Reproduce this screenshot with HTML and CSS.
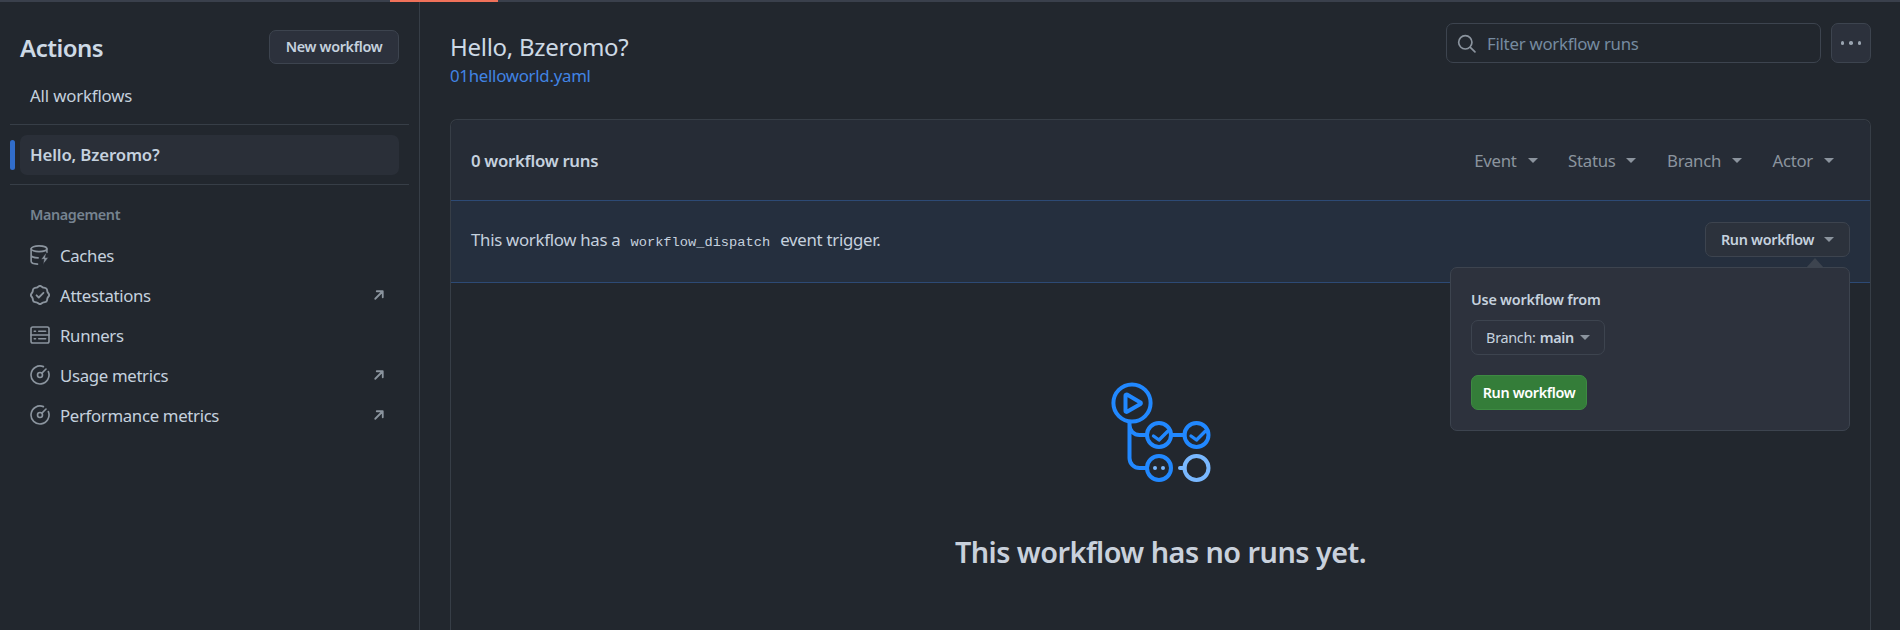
FILE: index.html
```html
<!DOCTYPE html>
<html lang="en">
<head>
<meta charset="utf-8">
<title>Actions</title>
<link rel="stylesheet" href="styles.css">
</head>
<body>
<div class="topbar"><span class="progress"></span></div>
<div class="layout">
  <aside class="sidebar">
    <div class="side-head">
      <h2 class="side-title">Actions</h2>
      <button class="btn btn-new">New workflow</button>
    </div>
    <a class="side-all">All workflows</a>
    <hr class="side-rule">
    <div class="side-current"><span class="side-marker"></span><a class="side-selected">Hello, Bzeromo?</a></div>
    <hr class="side-rule">
    <div class="side-label">Management</div>
    <ul class="side-list">
      <li class="side-item">
        <svg class="ico" viewBox="0 0 16 16"><ellipse cx="7.2" cy="3" rx="6.3" ry="2.3"/><path d="M.9 3v10c0 1.3 2.4 2.2 5.1 2.3M.9 8c0 1.3 2.6 2.3 5.6 2.3M13.5 3v3"/><path class="fill" d="M12.6 6.6 8.8 11.4h2.4l-.8 4.2 4.4-5.5h-2.6l.9-3.5z"/></svg>
        <span class="side-text">Caches</span>
      </li>
      <li class="side-item">
        <svg class="ico ico-solid" viewBox="0 0 16 16"><path d="m9.585.52.929.68c.153.112.331.186.518.215l1.138.175a2.678 2.678 0 0 1 2.24 2.24l.174 1.139c.029.187.103.365.215.518l.68.928a2.677 2.677 0 0 1 0 3.17l-.68.928a1.174 1.174 0 0 0-.215.518l-.175 1.138a2.678 2.678 0 0 1-2.241 2.241l-1.138.175a1.17 1.17 0 0 0-.518.215l-.928.68a2.677 2.677 0 0 1-3.17 0l-.928-.68a1.174 1.174 0 0 0-.518-.215L3.83 14.41a2.678 2.678 0 0 1-2.24-2.24l-.175-1.138a1.17 1.17 0 0 0-.215-.518l-.68-.928a2.677 2.677 0 0 1 0-3.17l.68-.928c.112-.153.186-.331.215-.518l.175-1.14a2.678 2.678 0 0 1 2.24-2.24l1.139-.175c.187-.029.365-.103.518-.215l.928-.68a2.677 2.677 0 0 1 3.17 0ZM7.303 1.728l-.927.68a2.67 2.67 0 0 1-1.18.489l-1.137.174a1.179 1.179 0 0 0-.987.987l-.174 1.136a2.677 2.677 0 0 1-.489 1.18l-.68.928a1.18 1.18 0 0 0 0 1.394l.68.927c.256.348.424.753.489 1.18l.174 1.137c.078.509.478.909.987.987l1.136.174a2.67 2.67 0 0 1 1.18.489l.928.68c.414.305.979.305 1.394 0l.927-.68a2.67 2.67 0 0 1 1.18-.489l1.137-.174a1.18 1.18 0 0 0 .987-.987l.174-1.136a2.67 2.67 0 0 1 .489-1.18l.68-.928a1.176 1.176 0 0 0 0-1.394l-.68-.927a2.686 2.686 0 0 1-.489-1.18l-.174-1.137a1.179 1.179 0 0 0-.987-.987l-1.136-.174a2.677 2.677 0 0 1-1.18-.489l-.928-.68a1.176 1.176 0 0 0-1.394 0ZM11.28 6.78l-3.75 3.75a.75.75 0 0 1-1.06 0L4.72 8.78a.751.751 0 0 1 .018-1.042.751.751 0 0 1 1.042-.018L7 8.94l3.22-3.22a.751.751 0 0 1 1.042.018.751.751 0 0 1 .018 1.042Z"/></svg>
        <span class="side-text">Attestations</span>
        <svg class="ext" viewBox="0 0 16 16"><path d="M3 13 13 3M5 3h8v8"/></svg>
      </li>
      <li class="side-item">
        <svg class="ico" viewBox="0 0 16 16"><rect x=".8" y="1.6" width="14.4" height="12.8" rx="1.4"/><path d="M.8 8h14.4M7 5h5.5M7 11h5.5M3.4 5h1M3.4 11h1"/></svg>
        <span class="side-text">Runners</span>
      </li>
      <li class="side-item">
        <svg class="ico" viewBox="0 0 16 16"><path d="M10.7 1.3A7.2 7.2 0 1 0 14.7 5.3"/><circle cx="8" cy="8" r="2"/><path d="M9.5 6.5 12.8 3.2"/></svg>
        <span class="side-text">Usage metrics</span>
        <svg class="ext" viewBox="0 0 16 16"><path d="M3 13 13 3M5 3h8v8"/></svg>
      </li>
      <li class="side-item">
        <svg class="ico" viewBox="0 0 16 16"><path d="M10.7 1.3A7.2 7.2 0 1 0 14.7 5.3"/><circle cx="8" cy="8" r="2"/><path d="M9.5 6.5 12.8 3.2"/></svg>
        <span class="side-text">Performance metrics</span>
        <svg class="ext" viewBox="0 0 16 16"><path d="M3 13 13 3M5 3h8v8"/></svg>
      </li>
    </ul>
  </aside>
  <main class="main">
    <header class="main-head">
      <div class="main-titles">
        <h1 class="main-title">Hello, Bzeromo?</h1>
        <a class="main-link">01helloworld.yaml</a>
      </div>
      <div class="main-tools">
        <div class="search">
          <svg class="search-ico" viewBox="0 0 16 16"><circle cx="7" cy="7" r="5.6"/><path d="m11.2 11.2 3.9 3.9"/></svg>
          <span class="search-text">Filter workflow runs</span>
        </div>
        <button class="btn btn-more" aria-label="More"><span class="dot"></span><span class="dot"></span><span class="dot"></span></button>
      </div>
    </header>
    <section class="box">
      <div class="box-head">
        <strong class="box-count">0 workflow runs</strong>
        <div class="filters">
          <span class="filter">Event<i class="caret"></i></span>
          <span class="filter">Status<i class="caret"></i></span>
          <span class="filter">Branch<i class="caret"></i></span>
          <span class="filter">Actor<i class="caret"></i></span>
        </div>
      </div>
      <div class="banner">
        <p class="banner-text">This workflow has a <code class="code">workflow_dispatch</code> event trigger.</p>
        <div class="run-wrap">
          <button class="btn btn-run">Run workflow<i class="caret caret-run"></i></button>
          <div class="popover">
            <span class="pop-arrow"></span>
            <div class="pop-label">Use workflow from</div>
            <button class="btn btn-branch">Branch: <b class="branch-name">main</b><i class="caret caret-branch"></i></button>
            <button class="btn btn-green">Run workflow</button>
          </div>
        </div>
      </div>
      <div class="empty">
        <svg class="empty-ico" viewBox="0 0 106 106">
          <g class="blue">
            <circle cx="24" cy="23" r="18.6"/>
            <path d="M17.5 15.5v15.5a1 1 0 0 0 1.5.8l13.5-7.8a1 1 0 0 0 0-1.6L19 14.6a1 1 0 0 0-1.5.9z"/>
            <path d="M21.5 42v3a10 10 0 0 0 10 10h7.5M21.5 45v33a10 10 0 0 0 10 10h7.5"/>
            <circle cx="51" cy="55" r="12"/>
            <circle cx="88.5" cy="55" r="12"/>
            <path d="M63 55h13.5"/>
            <circle cx="51" cy="88" r="12"/>
            <path class="thin" d="m45.5 56 5.5 4 8.5-8.5M83 56l5.5 4 8.5-8.5"/>
          </g>
          <g class="light">
            <circle cx="88.5" cy="88" r="12"/>
            <path d="M72 88h4.5"/>
          </g>
          <circle class="light-dot" cx="47" cy="88" r="2"/>
          <circle class="light-dot" cx="55" cy="88" r="2"/>
        </svg>
        <h3 class="empty-title">This workflow has no runs yet.</h3>
      </div>
    </section>
  </main>
</div>
</body>
</html>
```
FILE: styles.css
```css
* { box-sizing: border-box; }
html, body { margin: 0; height: 630px; overflow: hidden; }
body {
  background: #22272e;
  color: #c5d1de;
  font-family: "Noto Sans", "Open Sans", sans-serif;
  font-size: 16.8px;
}
h1, h2, h3, p, ul { margin: 0; padding: 0; }
button { font-family: inherit; cursor: pointer; }

.topbar { height: 2px; background: #3a404c; }
.progress { display: block; width: 108px; height: 2px; margin-left: 390px; background: #f0715a; }

.layout { display: flex; height: 628px; }

/* sidebar */
.sidebar { width: 420px; flex: none; border-right: 1px solid #373e47; padding: 0 10px; }
.side-head { display: flex; justify-content: space-between; align-items: center; padding: 28px 10px 0; height: 61px; }
.side-title { font-size: 24px; font-weight: 600; color: #cdd9e5; letter-spacing: -.5px; line-height: 33px; margin-top: 2px; }
.btn {
  border: 1px solid #3d444f;
  border-radius: 7px;
  background: #2c313c;
  color: #c5d1de;
  font-weight: 600;
  font-size: 14.4px;
  padding: 0;
}
.btn-new { width: 130px; height: 34px; letter-spacing: -.33px; }
.side-all { display: block; padding: 0 20px; margin-top: 21px; line-height: 24px; letter-spacing: -.15px; }
.side-rule { border: 0; height: 1px; background: #373e47; margin: 16px 0 10px; }
.side-current { display: flex; align-items: center; gap: 5px; }
.side-marker { width: 5px; height: 30px; border-radius: 3px; background: #316dca; }
.side-selected {
  flex: none;
  width: 379px; height: 40px;
  margin-right: 10px;
  padding-left: 10px;
  border-radius: 7px;
  background: #2a2f38;
  line-height: 40px;
  font-weight: 600;
  letter-spacing: -.15px;
}
.side-current + .side-rule { margin: 9px 0 0; }
.side-label { margin: 20px 20px 0; height: 20px; line-height: 20px; font-size: 14.4px; font-weight: 600; color: #768390; letter-spacing: -.4px; }
.side-list { list-style: none; margin-top: 10px; }
.side-item { display: flex; align-items: center; height: 40px; padding: 0 24px 0 20px; }
.side-text { flex: 1; margin-left: 10px; letter-spacing: -.33px; }
.ico { width: 20px; height: 20px; fill: none; stroke: #8b949e; stroke-width: 1.3; stroke-linecap: round; }
.ico .fill { fill: #8b949e; stroke: #22272e; stroke-width: .5; }
.ico-solid { fill: #8b949e; stroke: none; }
.ext { width: 12px; height: 12px; fill: none; stroke: #8b949e; stroke-width: 2.4; stroke-linecap: round; stroke-linejoin: round; }

/* main */
.main { flex: 1; min-width: 0; padding: 0 29px 0 30px; }
.main-head { display: flex; justify-content: space-between; height: 117px; padding-top: 21px; }
.main-title { font-size: 24px; font-weight: 400; line-height: 33px; color: #cdd9e5; letter-spacing: -.28px; margin-top: 7px; }
.main-link { display: block; color: #4184e4; line-height: 24px; letter-spacing: -.25px; margin-top: 1px; }
.main-tools { display: flex; gap: 10px; height: 40px; }
.search { display: flex; align-items: center; width: 375px; height: 40px; border: 1px solid #3d444f; border-radius: 7px; padding-left: 10px; }
.search-ico { width: 19px; height: 19px; fill: none; stroke: #8b949e; stroke-width: 1.4; stroke-linecap: round; }
.search-text { margin-left: 11px; color: #768ba0; letter-spacing: -.25px; }
.btn-more { display: flex; align-items: center; justify-content: center; gap: 5px; width: 40px; height: 40px; }
.dot { width: 3.5px; height: 3.5px; border-radius: 50%; background: #9aa4b0; }

.box { border: 1px solid #373e47; border-bottom: 0; border-radius: 7px 7px 0 0; height: 600px; }
.box-head { display: flex; justify-content: space-between; align-items: center; height: 80px; padding: 0 20px; background: #262c36; border-radius: 7px 7px 0 0; }
.box-count { font-weight: 600; color: #c5d1de; letter-spacing: -.3px; }
.filters { display: flex; gap: 30.6px; padding-right: 16px; }
.filter { display: flex; align-items: center; color: #8b949e; letter-spacing: -.3px; }
.caret { display: inline-block; width: 0; height: 0; margin-left: 11px; border: 5px solid transparent; border-top-color: currentColor; border-bottom: 0; }
.banner { display: flex; justify-content: space-between; align-items: center; height: 83px; padding: 0 20px 4px; background: #252f3e; border-top: 1px solid #2d4a75; border-bottom: 1px solid #2d4a75; }
.banner-text { letter-spacing: -.28px; }
.code { font-family: "Liberation Mono", "DejaVu Sans Mono", monospace; font-size: 13.7px; margin: 0 6px; letter-spacing: 0; }
.run-wrap { position: relative; }
.btn-run { display: flex; align-items: center; justify-content: center; width: 145px; height: 35px; background: #2c323c; letter-spacing: -.3px; font-size: 14.4px; }
.caret-run { color: #8b949e; margin-left: 10px; }
.popover {
  position: absolute; top: 45px; right: 0;
  width: 400px; height: 164px;
  padding: 22px 20px 0;
  background: #2d323d;
  border: 1px solid #3d444f;
  border-radius: 7px;
  z-index: 2;
}
.pop-arrow { position: absolute; top: -10px; left: 355px; width: 0; height: 0; border: 9px solid transparent; border-top: 0; border-bottom: 10px solid #3d444f; }
.pop-label { font-size: 14.4px; font-weight: 600; line-height: 20px; letter-spacing: -.22px; }
.btn-branch { display: flex; align-items: center; justify-content: center; width: 134px; height: 35px; margin-top: 10px; background: transparent; font-weight: 400; letter-spacing: -.3px; }
.branch-name { font-weight: 600; margin-left: 4px; }
.caret-branch { color: #8b949e; margin-left: 6px; }
.btn-green { display: block; width: 116px; height: 35px; margin-top: 20px; background: #347d39; border-color: #3d8a42; color: #fff; letter-spacing: -.35px; }

.empty { display: flex; flex-direction: column; align-items: center; padding-top: 97px; }
.empty-ico { width: 106px; height: 106px; fill: none; stroke-width: 4; stroke-linecap: round; stroke-linejoin: round; }
.blue { stroke: #2188ff; }
.blue .thin { stroke-width: 3.4; }
.light { stroke: #79b8ff; }
.light-dot { fill: #79b8ff; stroke: none; }
.empty-title { margin-top: 46px; font-size: 28.8px; font-weight: 600; line-height: 40px; color: #c9d1dc; letter-spacing: -.52px; }
```
